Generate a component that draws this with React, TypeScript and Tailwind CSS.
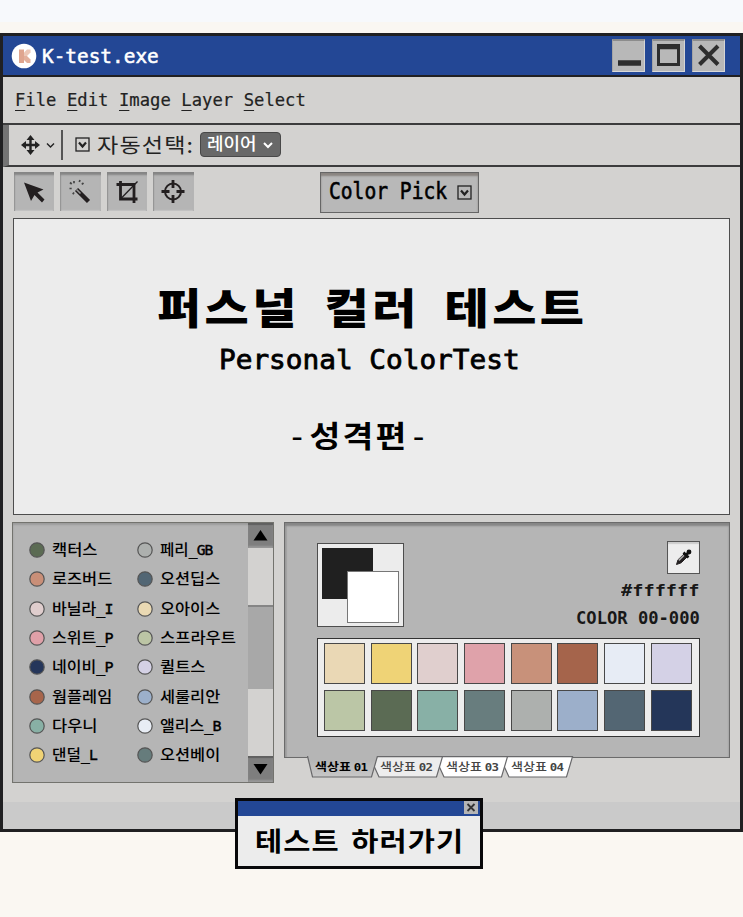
import { useLayoutEffect, useRef, useState } from "react";
import type { ReactNode } from "react";

const MONO = "font-['DejaVu_Sans_Mono','Noto_Sans_CJK_KR',monospace]";
const HANGUL = "font-['Noto_Sans_CJK_KR',sans-serif]";

/** A line of text stretched horizontally to fill a given width. */
function Fit({ w, className = "", children }: { w: number; className?: string; children: ReactNode }) {
  const ref = useRef<HTMLSpanElement>(null);
  const [scale, setScale] = useState(1);
  useLayoutEffect(() => {
    if (ref.current) setScale(w / ref.current.offsetWidth);
  }, [w]);
  return (
    <span className="block shrink-0" style={{ width: w }}>
      <span
        ref={ref}
        className={`inline-block origin-left whitespace-pre ${className}`}
        style={{ transform: `scaleX(${scale})` }}
      >
        {children}
      </span>
    </span>
  );
}

function CheckBox({ size }: { size: number }) {
  return (
    <svg width={size} height={size} viewBox="0 0 15 15" fill="none" stroke="#222" className="shrink-0">
      <rect x="1" y="1" width="13" height="13" strokeWidth="1.3" />
      <path d="M4 5.5 7.5 9.5 11 5.5" strokeWidth="2.2" />
    </svg>
  );
}

function WindowButton({ children }: { children: ReactNode }) {
  return (
    <div className="h-[33px] w-[33px] border-t-2 border-r border-b border-l border-t-[#8c8c8c] border-r-[#d5d5d5] border-b-[#d9d9d9] border-l-[#a5a5a5] bg-[#b8b8b8]">
      <svg width="31" height="30" viewBox="0 0 31 30" fill="none" stroke="#2e2e2e">
        {children}
      </svg>
    </div>
  );
}

function Tool({ children }: { children: ReactNode }) {
  return (
    <div className="h-[39px] w-[40.5px] bg-[#b5b5b5] shadow-[inset_0_3px_2px_#858585,inset_1px_0_1px_#999,inset_-1px_-1px_1px_#c8c8c8]">
      <svg width="40" height="39" viewBox="0 0 40 39" fill="none" stroke="#231f20">
        {children}
      </svg>
    </div>
  );
}

const names = [
  ["캑터스", "#5b6b53", 45, "페리_GB", "#adb0ae", 53],
  ["로즈버드", "#c98f78", 60, "오션딥스", "#526674", 60],
  ["바닐라_I", "#dfcdcd", 61, "오아이스", "#ead9b3", 60],
  ["스위트_P", "#dfa0a8", 61, "스프라우트", "#bcc5a5", 76],
  ["네이비_P", "#25365a", 61, "퀼트스", "#d4d1e5", 45],
  ["웜플레임", "#a7654b", 60, "세룰리안", "#9cb0cb", 60],
  ["다우니", "#88b0a5", 45, "앨리스_B", "#e8edf5", 61],
  ["댄덜_L", "#f0d375", 45, "오션베이", "#667c7c", 60],
] as const;

const swatches = [
  "bg-[#ead8b5]", "bg-[#efd376]", "bg-[#e0cfce]", "bg-[#dfa2aa]",
  "bg-[#c8917a]", "bg-[#a5644b]", "bg-[#e7ecf5]", "bg-[#d4d1e6]",
  "bg-[#bbc6a6]", "bg-[#5b6b54]", "bg-[#88b0a6]", "bg-[#687d7e]",
  "bg-[#adb0ae]", "bg-[#9cafca]", "bg-[#536673]", "bg-[#243659]",
];

function Dot({ color }: { color: string }) {
  return (
    <svg width="16" height="16" viewBox="0 0 16 16" className="shrink-0">
      <circle cx="8" cy="8" r="7.2" fill={color} stroke="#555" strokeWidth="1.2" />
    </svg>
  );
}

function Name({ text, color, w }: { text: string; color: string; w: number }) {
  const [hangul, latin] = text.split("_");
  return (
    <div className="flex h-[29.3px] items-center gap-[6.5px]">
      <Dot color={color} />
      <Fit w={w} className={`${HANGUL} text-[15px] leading-[20px] font-medium text-black`}>
        {hangul}
        {latin && (
          <span className={`${MONO} text-[14px] tracking-[-0.8px] [-webkit-text-stroke:0.4px_black]`}>_{latin}</span>
        )}
      </Fit>
    </div>
  );
}

function ColorList() {
  return (
    <section className="flex h-[261px] w-[262px] border-[1.5px] border-[#73736e] bg-[#b5b5b5] shadow-[inset_0_2px_2px_#9b9b9b]">
      <div className="flex w-[235px] shrink-0 pt-[13px] pl-[16px]">
        <div className="w-[108px]">
          {names.map((n) => <Name key={n[0]} text={n[0]} color={n[1]} w={n[2]} />)}
        </div>
        <div>
          {names.map((n) => <Name key={n[3]} text={n[3]} color={n[4]} w={n[5]} />)}
        </div>
      </div>
      <div className="flex grow flex-col bg-[#d3d2d0]">
        <div className="flex h-[25px] items-center justify-center bg-[#7e7e7e] shadow-[inset_0_2px_1px_#606060,inset_0_-2px_2px_#999]">
          <svg width="15" height="12"><path d="M7.5 1 14.5 11.5H.5Z" fill="#000" /></svg>
        </div>
        <div className="h-[57px]" />
        <div className="h-[84px] border-t-2 border-[#858585] bg-[#a8a8a8]" />
        <div className="h-[67px]" />
        <div className="flex grow items-center justify-center bg-[#7e7e7e] shadow-[inset_0_2px_1px_#606060,inset_0_-2px_2px_#999]">
          <svg width="15" height="12"><path d="M7.5 11.5 14.5 1H.5Z" fill="#000" /></svg>
        </div>
      </div>
    </section>
  );
}

function TabLabel({ n, active = false }: { n: string; active?: boolean }) {
  return (
    <div className="w-[65.3px]">
      <Fit w={52} className={active ? "font-bold text-black" : "font-medium"}>
        색상표 <span className={`${MONO} text-[10.5px] font-bold tracking-[-0.7px]`}>{n}</span>
      </Fit>
    </div>
  );
}

function Tabs() {
  return (
    <div className="relative ml-[21.6px] h-[22px] w-[272px]">
      <svg width="270" height="23" className="absolute -top-[1.5px] left-0" stroke="#68686a" strokeWidth="1.2">
        <defs>
          <linearGradient id="active-tab" x1="0" y1="0" x2="0" y2="1">
            <stop offset="0.2" stopColor="#b5b5b5" />
            <stop offset="1" stopColor="#c7c7c7" />
          </linearGradient>
        </defs>
        <path d="M200.5.7H266.5L260.5 21H203L197.5 9Z" fill="#fff" />
        <path d="M135.5.7H201.5L195.5 21H138L132.5 9Z" fill="#fff" />
        <path d="M70.5.7H136.5L130.5 21H73L67.5 9Z" fill="#ededed" />
        <path d="M1.5 0 6.5 21H65.5L71.5 0" fill="url(#active-tab)" />
      </svg>
      <div className={`relative flex pl-[9px] text-[11px] leading-[17px] text-[#444] ${HANGUL}`}>
        <TabLabel n="01" active />
        <TabLabel n="02" />
        <TabLabel n="03" />
        <TabLabel n="04" />
      </div>
    </div>
  );
}

function Palette() {
  return (
    <div>
      <section className="h-[236px] w-[446px] border-[1.5px] border-[#6b6b6b] bg-[#b5b5b5] pt-[20px] pl-[31.5px] shadow-[inset_0_3px_2px_#868686,inset_2px_0_1px_#a3a3a3]">
        <div className="flex h-[88px] w-[383px] justify-between">
          <div className="relative h-[84px] w-[87px] border-[1.5px] border-[#4d4d4d] bg-[#ececec]">
            <div className="absolute top-[4px] left-[4px] h-[51px] w-[51px] bg-[#202020]" />
            <div className="absolute top-[27px] left-[29px] h-[52px] w-[52px] border border-[#777] bg-white" />
          </div>
          <div className="-mt-[2px] flex flex-col items-end">
            <div className="flex h-[33px] w-[33px] items-center justify-center border border-[#555] bg-[#ededed] shadow-[inset_0_2px_1px_#ccc]">
              <svg width="17" height="17" viewBox="0 0 17 17">
                <path d="M1.5 15.5 3 10.8 9.2 4.8 12.2 7.8 6.2 13.8Z" fill="#231f20" stroke="#231f20" />
                <path d="M3.8 11.4 9 6.3" stroke="#aaa" strokeWidth="1.6" />
                <path d="m8.5 3.5 5 5M11 6l2.5-2.5" stroke="#111" strokeWidth="2.6" />
                <circle cx="14" cy="3" r="2.4" fill="#111" />
              </svg>
            </div>
            <div className={`mt-[6.5px] mr-px text-[16px] leading-[21px] font-bold text-[#181818] ${MONO}`}>
              <Fit w={78}>#ffffff</Fit>
            </div>
            <div className={`mt-[6px] text-[17px] leading-[22px] font-bold text-[#181818] ${MONO}`}>
              <Fit w={124}>COLOR 00-000</Fit>
            </div>
          </div>
        </div>
        <div className="mt-[7px] grid h-[99px] w-[383px] grid-cols-[repeat(8,41px)] grid-rows-[41px_41px] gap-x-[5.7px] gap-y-[6px] border-[1.3px] border-[#333] bg-[#ededed] pt-[4.5px] pl-[6px]">
          {swatches.map((c) => <div key={c} className={`border border-[#484848] ${c}`} />)}
        </div>
      </section>
      <Tabs />
    </div>
  );
}

function LaunchDialog() {
  return (
    <div className="absolute top-[797.5px] left-[235px] flex h-[71.5px] w-[248px] flex-col border-[3px] border-[#08080a] bg-[#ececec]">
      <div className="flex h-[15px] justify-end bg-[#234795] pr-[2px]">
        <div className="h-[13px] w-[14px] bg-[#b5b5b5]">
          <svg width="14" height="13" stroke="#333" strokeWidth="1.8"><path d="m3.5 3 7 7m0-7-7 7" /></svg>
        </div>
      </div>
      <div className="pt-[5px] pl-[17px]">
        <Fit w={209} className={`${HANGUL} text-[26px] leading-[38px] font-bold tracking-[1px] text-black [word-spacing:3px]`}>테스트 하러가기</Fit>
      </div>
    </div>
  );
}

export default function App() {
  return (
    <div className={`relative h-[917px] w-[743px] overflow-hidden bg-[#faf7f2] ${MONO}`}>
      <div className="h-[22px] bg-[#f7f9fc]" />
      <main className="mt-[11px] flex h-[799px] flex-col border-[3px] border-[#202022] bg-[#d3d2d0]">
        <header className="flex h-[41px] shrink-0 items-center border-b-2 border-[#202022] bg-[#234795]">
          <svg width="26" height="26" viewBox="0 0 26 26" className="ml-[8px]">
            <circle cx="13" cy="13" r="12.3" fill="#fff" />
            <path d="M8 6.5h5v13.500H8Z" fill="#dfa58f" />
            <path d="M13 13V9.500l3-3h3.500v3L16 13Z" fill="#ecc7b7" />
            <path d="M13 13h3l3.500 3.500V20H16l-3-3Z" fill="#e3b09c" />
          </svg>
          <div className="ml-[5px] grow pt-[3px] text-[19.4px] leading-[26px] text-white [-webkit-text-stroke:0.5px_white]">
            <Fit w={117}>K-test.exe</Fit>
          </div>
          <div className="mr-[15px] flex gap-[7px]">
            <WindowButton><path d="M5 22H28" strokeWidth="5.5" /></WindowButton>
            <WindowButton>
              <rect x="5.5" y="4.5" width="20" height="19" strokeWidth="3" />
              <path d="M4 6H27" strokeWidth="4.5" />
            </WindowButton>
            <WindowButton><path d="m6.5 5 18.500 18.500m0-18.500-18.500 18.500" strokeWidth="4" /></WindowButton>
          </div>
        </header>
        <nav className="flex h-[48px] shrink-0 border-b-2 border-[#3c3c3c] pt-[10px] pl-[12px] text-[17.2px] leading-[26px] text-[#222] [-webkit-text-stroke:0.2px_#222]">
          {["File", "Edit", "Image", "Layer", "Select"].map((m) => (
            <span key={m} className="mr-[10.6px]">
              <span className="underline decoration-[1.3px] underline-offset-[4px]">{m[0]}</span>{m.slice(1)}
            </span>
          ))}
        </nav>
        <div className="flex h-[41.5px] shrink-0 items-center border-b-2 border-l-[6px] border-b-[#3c3c3c] border-l-[#747474]">
          <svg width="38" height="20" viewBox="0 0 38 20" className="ml-[11px]" fill="none" stroke="#222">
            <path d="M10.500 3v14M3 10h15" strokeWidth="2.4" />
            <path d="M10.500 0 14.500 5H6.500ZM10.500 20 14.500 15H6.500ZM1 10l5-4v8ZM20 10l-5-4v8Z" fill="#222" stroke="none" />
            <path d="m27 8.500 3.500 3.500L34 8.500" strokeWidth="1.4" />
          </svg>
          <div className="ml-[3px] h-[30px] w-[1.5px] bg-[#555]" />
          <div className="ml-[12px] flex"><CheckBox size={15} /></div>
          <div className="ml-[7px]">
            <Fit w={97} className={`${HANGUL} text-[20.5px] leading-[28px] tracking-[1px] text-[#222]`}>자동선택:</Fit>
          </div>
          <div className="ml-[6px] flex h-[25px] w-[81px] items-center rounded-[4px] border border-[#484848] bg-[#686868] pl-[6px] text-white">
            <Fit w={50} className={`${HANGUL} text-[16.5px] leading-[22px] font-medium`}>레이어</Fit>
            <svg width="12" height="10" className="ml-[5px]" fill="none" stroke="#fff" strokeWidth="2"><path d="m2 3 4 4 4-4" /></svg>
          </div>
        </div>
        <div className="flex h-[51.5px] shrink-0 gap-[6px] pt-[5.5px] pl-[10.5px]">
          <Tool><path d="M10 10.500 29.500 17.500 23.500 20.500 30.500 27.500 28 30.500 20.500 23 17 29Z" fill="#231f20" stroke="none" /></Tool>
          <Tool>
            <path d="m16.500 17.500 12 12" strokeWidth="4.400" />
            <path d="m16.500 17.500 4 4" stroke="#999" strokeWidth="1.6" />
            <path d="M14 9v2.200M20 8l-.700 2M23.500 11l-1.700 1.400M10 10.500l1.700 1.500M9.500 16.500h2.200M14 20.500l-1.200 1.700" stroke="#444" strokeWidth="1.700" />
          </Tool>
          <Tool>
            <path d="M13.500 9v18h17M9.500 12.500H27v18.500" strokeWidth="2.8" />
            <path d="m14 26.500 16.500-17" strokeWidth="1.3" />
          </Tool>
          <Tool>
            <circle cx="20" cy="19.500" r="8" strokeWidth="2" />
            <path d="M20 8v8M20 23v8M8.500 19.500h8M23.500 19.500h8" strokeWidth="2.8" />
          </Tool>
          <div className="ml-[120px] flex h-[40.5px] w-[159px] items-center border border-[#666] bg-[#b8b8b8] pl-[8px] shadow-[inset_0_3px_2px_#898480]">
            <Fit w={118}><span className="inline-block scale-y-[1.18] text-[19.8px] leading-[28px] text-black [-webkit-text-stroke:0.5px_black]">Color Pick</span></Fit>
            <div className="ml-[10px] flex"><CheckBox size={15} /></div>
          </div>
        </div>
        <section className="ml-[10px] flex h-[297px] w-[717px] shrink-0 flex-col border-[1.3px] border-[#4d4d4d] bg-[#ececec] text-black">
          <div className="mt-[58px] ml-[143px]">
            <Fit w={430} className={`${HANGUL} text-[42px] leading-[58px] font-black tracking-[3px] [word-spacing:9px]`}>퍼스널 컬러 테스트</Fit>
          </div>
          <div className="mt-[8px] ml-[205px] text-[27px] leading-[34px] [-webkit-text-stroke:0.8px_black]">
            <Fit w={301}>Personal ColorTest</Fit>
          </div>
          <div className="mt-[34.5px] ml-[273px]">
            <Fit w={144} className={`${HANGUL} text-[30px] leading-[44px] font-bold tracking-[2px]`}>
              <span className={`${MONO} font-normal`}>-</span>
              성격편
              <span className={`${MONO} font-normal`}>-</span>
            </Fit>
          </div>
        </section>
        <div className="mt-[6.5px] ml-[9.400px] flex h-[280px] shrink-0 gap-[10px]">
          <ColorList />
          <Palette />
        </div>
        <footer className="grow bg-[#cacaca]" />
      </main>
      <LaunchDialog />
    </div>
  );
}
